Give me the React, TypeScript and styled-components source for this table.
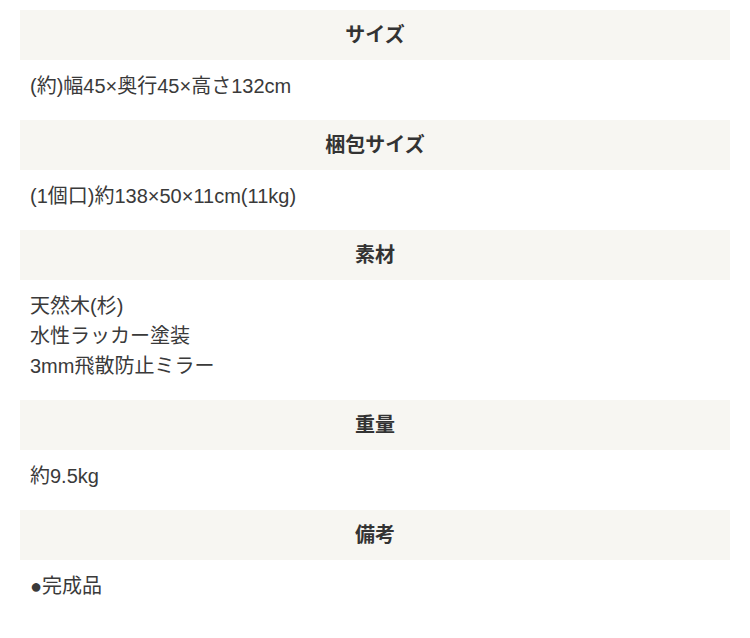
import React from "react";
import styled, { createGlobalStyle } from "styled-components";

const Global = createGlobalStyle`
  html, body { margin: 0; padding: 0; background: #fff; }
  body { font-family: "Liberation Sans", Arial, "Noto Sans CJK JP", sans-serif; color: #333; }
`;

const Table = styled.div`
  padding: 10px 20px;
  display: flex;
  flex-direction: column;
`;

const Head = styled.div`
  height: 50px;
  box-sizing: border-box;
  padding-bottom: 3px;
  background: #f7f6f2;
  display: flex;
  align-items: center;
  justify-content: center;
  font-size: 20px;
  font-weight: 700;
  color: #333;
`;

const Body = styled.div`
  padding: 11px 10px 19px;
  font-size: 20px;
  line-height: 30px;
  color: #3a3a3a;
`;

const Line = styled.div``;

const rows: { title: string; lines: string[] }[] = [
  { title: "サイズ", lines: ["(約)幅45×奥行45×高さ132cm"] },
  { title: "梱包サイズ", lines: ["(1個口)約138×50×11cm(11kg)"] },
  { title: "素材", lines: ["天然木(杉)", "水性ラッカー塗装", "3mm飛散防止ミラー"] },
  { title: "重量", lines: ["約9.5kg"] },
  { title: "備考", lines: ["●完成品"] },
];

export default function App() {
  return (
    <>
      <Global />
      <Table>
        {rows.map((r) => (
          <React.Fragment key={r.title}>
            <Head>{r.title}</Head>
            <Body>
              {r.lines.map((l) => (
                <Line key={l}>{l}</Line>
              ))}
            </Body>
          </React.Fragment>
        ))}
      </Table>
    </>
  );
}
